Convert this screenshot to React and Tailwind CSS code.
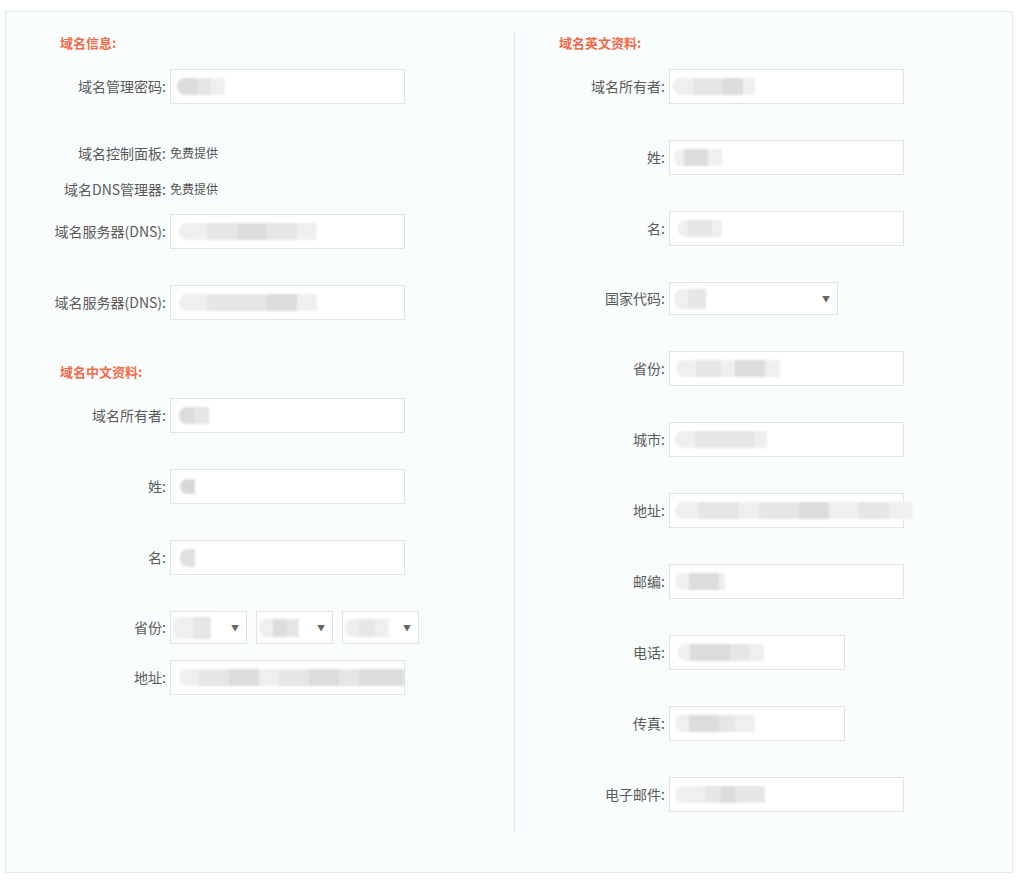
import React from "react";

const FONT = { fontFamily: '"Microsoft YaHei", "Noto Sans CJK SC", "Noto Sans", sans-serif' };

function Blob({ segs, offset = 0 }) {
  return (
    <div className="flex items-center blur-[1.2px]" style={{ marginLeft: offset }}>
      {segs.map(([w, c, h], i) => (
        <div
          key={i}
          className={i === 0 ? "rounded-l-[8px]" : ""}
          style={{ width: w, height: h || 17, background: c }}
        />
      ))}
    </div>
  );
}

function Field({ w = 235, h = 35, segs, offset = 4, select = false }) {
  return (
    <div
      className="relative flex items-center border border-[#e3e3e3] bg-white shrink-0"
      style={{ width: w, height: h }}
    >
      {segs && <Blob segs={segs} offset={offset} />}
      {select && (
        <span className="absolute right-[7px] top-1/2 -translate-y-1/2 text-[8px] leading-none text-[#666]">
          ▼
        </span>
      )}
    </div>
  );
}

function Row({ label, labelW, mt, children }) {
  return (
    <div className="flex items-center gap-[4px]" style={{ marginTop: mt }}>
      <div className="text-right text-[14px] text-[#5a5a5a] shrink-0" style={{ width: labelW }}>
        {label}
      </div>
      {children}
    </div>
  );
}

const G1 = "#e6e6e6";
const G2 = "#dcdcdc";
const G3 = "#efefef";

export default function App() {
  return (
    <div className="bg-white min-h-[881px] w-[1023px]" style={FONT}>
      <div className="ml-[5px] pt-[11px]">
        <div className="w-[1008px] h-[862px] border border-[#e2ebee] bg-[#f9fdfe] pt-[20px] flex">
          {/* Left column */}
          <div className="w-[508px] shrink-0">
            <div className="mt-[1px] h-[20px] leading-[20px] pl-[54px] text-[13px] font-bold text-[#f26a48]">
              域名信息:
            </div>
            <Row label="域名管理密码:" labelW={160} mt={16}>
              <Field segs={[[20, G2], [14, G1], [14, G3]]} offset={6} />
            </Row>
            <div className="mt-[39px] h-[20px] flex items-center gap-[4px]">
              <div className="w-[160px] text-right text-[14px] text-[#5a5a5a]">域名控制面板:</div>
              <div className="text-[12px] text-[#555]">免费提供</div>
            </div>
            <div className="mt-[16px] h-[20px] flex items-center gap-[4px]">
              <div className="w-[160px] text-right text-[14px] text-[#5a5a5a]">域名DNS管理器:</div>
              <div className="text-[12px] text-[#555]">免费提供</div>
            </div>
            <Row label="域名服务器(DNS):" labelW={160} mt={15}>
              <Field segs={[[28, G3], [30, G1], [30, G2], [30, G1], [20, G3]]} offset={8} />
            </Row>
            <Row label="域名服务器(DNS):" labelW={160} mt={36}>
              <Field segs={[[28, G3], [30, G1], [30, G1], [30, G2], [20, G3]]} offset={8} />
            </Row>
            <div className="mt-[42px] h-[20px] leading-[20px] pl-[54px] text-[13px] font-bold text-[#f26a48]">
              域名中文资料:
            </div>
            <Row label="域名所有者:" labelW={160} mt={16}>
              <Field segs={[[16, G2], [14, G1]]} offset={8} />
            </Row>
            <Row label="姓:" labelW={160} mt={36}>
              <Field segs={[[15, "#d8d8d8", 15]]} offset={9} />
            </Row>
            <Row label="名:" labelW={160} mt={36}>
              <Field segs={[[15, "#e0e0e0", 18]]} offset={9} />
            </Row>
            <Row label="省份:" labelW={160} mt={36}>
              <div className="flex gap-[9px]">
                <Field w={77} h={33} select segs={[[20, G3, 22], [18, G1, 22]]} offset={2} />
                <Field w={77} h={33} select segs={[[14, G3, 18], [14, G2, 18], [12, G1, 18]]} offset={2} />
                <Field w={77} h={33} select segs={[[14, G3, 18], [16, G1, 18], [14, G3, 18]]} offset={2} />
              </div>
            </Row>
            <Row label="地址:" labelW={160} mt={16}>
              <Field
                segs={[[20, G3], [30, G1], [30, G2], [20, G3], [30, G1], [30, G2], [20, G1], [45, G2]]}
                offset={8}
              />
            </Row>
          </div>

          {/* Right column */}
          <div className="flex-1 h-[800px] border-l border-[#dfe8ec]">
            <div className="mt-[1px] h-[20px] leading-[20px] pl-[44px] text-[13px] font-bold text-[#f26a48]">
              域名英文资料:
            </div>
            <Row label="域名所有者:" labelW={150} mt={16}>
              <Field segs={[[20, G3], [30, G1], [20, G2], [12, G3]]} offset={3} />
            </Row>
            <Row label="姓:" labelW={150} mt={36}>
              <Field segs={[[10, G3], [24, G2], [14, G3]]} offset={4} />
            </Row>
            <Row label="名:" labelW={150} mt={36}>
              <Field segs={[[10, G3], [24, G1], [10, G3]]} offset={8} />
            </Row>
            <Row label="国家代码:" labelW={150} mt={36}>
              <Field w={169} h={33} select segs={[[14, G3, 20], [18, G1, 20]]} offset={4} />
            </Row>
            <Row label="省份:" labelW={150} mt={36}>
              <Field segs={[[20, G3], [25, G1], [14, G3], [30, G2], [15, G3]]} offset={6} />
            </Row>
            <Row label="城市:" labelW={150} mt={36}>
              <Field segs={[[20, G3], [30, G1], [30, G1], [12, G3]]} offset={5} />
            </Row>
            <Row label="地址:" labelW={150} mt={36}>
              <Field
                segs={[[24, G3], [40, G1], [20, G3], [40, G1], [30, G2], [30, G3], [30, G1], [24, G3]]}
                offset={5}
              />
            </Row>
            <Row label="邮编:" labelW={150} mt={36}>
              <Field segs={[[14, G3], [30, G2], [6, G3]]} offset={5} />
            </Row>
            <Row label="电话:" labelW={150} mt={36}>
              <Field w={176} segs={[[12, G3], [40, G2], [20, G1], [14, G3]]} offset={8} />
            </Row>
            <Row label="传真:" labelW={150} mt={36}>
              <Field w={176} segs={[[14, G3], [30, G2], [16, G1], [20, G3]]} offset={5} />
            </Row>
            <Row label="电子邮件:" labelW={150} mt={36}>
              <Field segs={[[30, G3], [16, G1], [14, G2], [30, G1]]} offset={5} />
            </Row>
          </div>
        </div>
      </div>
    </div>
  );
}
